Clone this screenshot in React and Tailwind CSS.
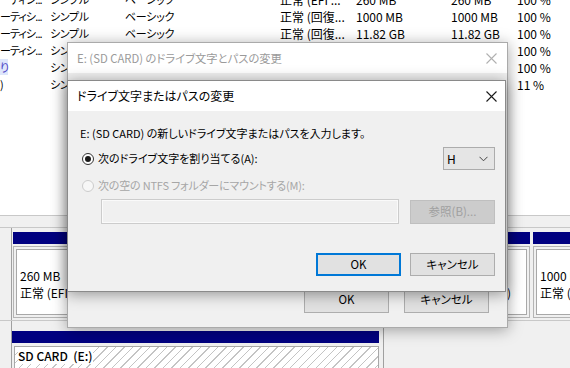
import React from 'react';

const font = "font-['Noto_Sans_CJK_JP',sans-serif] [font-feature-settings:'palt']";

const rows = [
  ['ーティシ...', 'シンプル', 'ベーシック', '正常 (EFI ...', '260 MB', '260 MB', '100 %'],
  ['ーティシ...', 'シンプル', 'ベーシック', '正常 (回復...', '1000 MB', '1000 MB', '100 %'],
  ['ーティシ...', 'シンプル', 'ベーシック', '正常 (回復...', '11.82 GB', '11.82 GB', '100 %'],
  ['ーティシ...', 'シンプル', 'ベーシック', '正常 (ブー...', '237.29 GB', '201.5 GB', '100 %'],
  ['り', 'シンプル', 'ベーシック', '正常 (プラ...', '29.72 GB', '29.60 GB', '100 %'],
  [')', 'シンプル', 'ベーシック', '正常 (プラ...', '29.71 GB', '3.37 GB', '11 %'],
];

const colW = [
  'w-[50px] text-[11px] tracking-[-0.9px]',
  'w-[75px] text-[11px] tracking-[-0.3px]',
  'w-[155px] text-[11px] tracking-[-0.3px]',
  'w-[76px] text-[12px]',
  'w-[95px] text-[12px]',
  'w-[66px] text-[12px]',
  'w-[53px] text-[12px]',
];

function CloseIcon({ color }) {
  return (
    <svg width="11" height="11" viewBox="0 0 11 11">
      <path d="M0.5 0.5 L10.5 10.5 M10.5 0.5 L0.5 10.5" stroke={color} strokeWidth="1.1" fill="none" />
    </svg>
  );
}

function Partition({ width, size, status, tail }) {
  return (
    <div className={`flex flex-col ${width} shrink-0`}>
      <div className="h-[12px] bg-[#000080]" />
      <div className="mt-[2px] h-[72px] border border-[#b4b4b4] bg-[#f0f0f0] p-[2px]">
        <div className="h-full border border-[#a8a8a8] bg-white pl-[3px] text-[12px] leading-[17px] text-black overflow-hidden">
          <div className="h-[17px]" />
          <div className="h-[17px] whitespace-nowrap">{size}</div>
          <div className="h-[17px] flex justify-between pr-[15px] whitespace-nowrap">
            <span className="overflow-hidden">{status}</span>
            {tail && <span>{tail}</span>}
          </div>
        </div>
      </div>
    </div>
  );
}

export default function App() {
  return (
    <div className={`relative w-[570px] h-[368px] overflow-hidden bg-[#f0f0f0] ${font}`}>
      {/* volume list */}
      <div className="h-[216px] bg-white border-b border-[#c8c8c8] overflow-hidden">
        <div className="mt-[-9px]">
          {rows.map((r, i) => (
            <div key={i} className="flex h-[17px] items-center text-black whitespace-nowrap">
              {r.map((c, j) => (
                <div key={j} className={`${colW[j]} shrink-0 overflow-hidden`}>
                  {i === 4 && j === 0 ? (
                    <span className="bg-[#dde6fb] text-[#4a3fc4]">{c}</span>
                  ) : (
                    c
                  )}
                </div>
              ))}
            </div>
          ))}
        </div>
      </div>

      {/* graphical disk view */}
      <div className="h-[11px]" />
      <div className="flex h-[94px] border-t border-b border-[#c8c8c8]">
        <div className="w-[12px] shrink-0 border-r border-[#a0a0a0]" />
        <div className="flex gap-[3px] pl-[1px] pt-[4px]">
          <Partition width="w-[236px]" size="260 MB" status="正常 (EFI システム パーティション)" />
          <Partition width="w-[278px]" size="237.29 GB NTFS" status="正常 (ブート, ページ ファイル, クラッシュ ダンプ, ベーシック データ パーティション" tail=")" />
          <Partition width="w-[60px]" size="1000 MB" status="正常 (回復パーティション)" />
        </div>
      </div>
      <div className="flex h-[48px]">
        <div className="w-[12px] shrink-0 border-r border-[#a0a0a0]" />
        <div className="flex flex-col w-[372px] shrink-0 border-r border-[#a0a0a0] pt-[10px] pr-[4px]">
          <div className="h-[12px] bg-[#000080]" />
          <div className="mt-[3px] flex-1 ml-[2px] border border-[#a8a8a8] bg-[repeating-linear-gradient(135deg,#ffffff_0px,#ffffff_5px,#c4c4c4_5px,#c4c4c4_6px)] pl-[3px] text-[12px] leading-[17px] text-black font-medium">
            <span className="bg-white">SD CARD&nbsp;&nbsp;(E:)</span>
          </div>
        </div>
      </div>

      {/* outer dialog */}
      <div className="absolute left-[67px] top-[42px] w-[441px] h-[286px] flex flex-col bg-[#f0f0f0] border border-[#aaaaaa] shadow-[0_2px_14px_rgba(0,0,0,0.35)]">
        <div className="h-[30px] shrink-0 bg-white flex items-center justify-between pl-[9px] pr-[10px]">
          <span className="text-[11.3px] text-[#9a9a9a]">E: (SD CARD) のドライブ文字とパスの変更</span>
          <CloseIcon color="#b0b0b0" />
        </div>
        <div className="flex-1" />
        <div className="flex justify-end gap-[15px] pr-[18px] pb-[14px] text-[11.5px]">
          <div className="w-[85px] h-[26px] flex items-center justify-center bg-[#e1e1e1] border border-[#adadad] text-black">OK</div>
          <div className="w-[85px] h-[26px] flex items-center justify-center bg-[#e1e1e1] border border-[#adadad] text-black">キャンセル</div>
        </div>
      </div>

      {/* inner dialog */}
      <div className="absolute left-[67px] top-[80px] w-[439px] h-[212px] flex flex-col bg-[#f0f0f0] border border-[#8a8a8a] shadow-[0_2px_14px_rgba(0,0,0,0.4)]">
        <div className="h-[30px] shrink-0 bg-white flex items-center justify-between pl-[9px] pr-[8px]">
          <span className="text-[12px] text-black">ドライブ文字またはパスの変更</span>
          <CloseIcon color="#1a1a1a" />
        </div>
        <div className="flex flex-col text-[11px] text-black">
          <div className="mt-[14px] h-[17px] leading-[17px] pl-[12px] text-[11px]">E: (SD CARD) の新しいドライブ文字またはパスを入力します。</div>
          <div className="mt-[5px] h-[23px] flex items-center justify-between pl-[14px] pr-[10px]">
            <div className="flex items-center gap-[4px]">
              <div className="w-[12px] h-[12px] rounded-full border border-[#333333] bg-white flex items-center justify-center">
                <div className="w-[6px] h-[6px] rounded-full bg-[#1a1a1a]" />
              </div>
              <span>次のドライブ文字を割り当てる(A):</span>
            </div>
            <div className="w-[52px] h-[23px] flex items-center justify-between bg-[#e5e5e5] border border-[#acacac] pl-[3px] pr-[6px] text-[12px]">
              <span>H</span>
              <svg width="9" height="6" viewBox="0 0 9 6">
                <path d="M0.5 0.8 L4.5 4.8 L8.5 0.8" stroke="#444" strokeWidth="1" fill="none" />
              </svg>
            </div>
          </div>
          <div className="mt-[7px] h-[17px] flex items-center gap-[4px] pl-[14px] text-[#a6a6a6] tracking-[-0.2px]">
            <div className="w-[12px] h-[12px] rounded-full border border-[#cccccc] bg-[#f7f7f7]" />
            <span>次の空の NTFS フォルダーにマウントする(M):</span>
          </div>
          <div className="mt-[5px] h-[25px] flex items-center justify-between pl-[33px] pr-[10px]">
            <div className="w-[298px] h-[25px] border border-[#cccccc] bg-[#f0f0f0] shadow-[inset_0_0_0_1px_#fafafa]" />
            <div className="w-[85px] h-[24px] flex items-center justify-center bg-[#cccccc] border border-[#bfbfbf] text-[#a0a0a0] text-[11.5px]">参照(B)...</div>
          </div>
          <div className="mt-[29px] h-[23px] flex justify-end gap-[9px] pr-[10px] text-[11.5px]">
            <div className="w-[85px] h-[23px] flex items-center justify-center bg-[#e1e1e1] border-2 border-[#0078d7]">OK</div>
            <div className="w-[85px] h-[23px] flex items-center justify-center bg-[#e1e1e1] border border-[#adadad]">キャンセル</div>
          </div>
        </div>
      </div>
    </div>
  );
}
